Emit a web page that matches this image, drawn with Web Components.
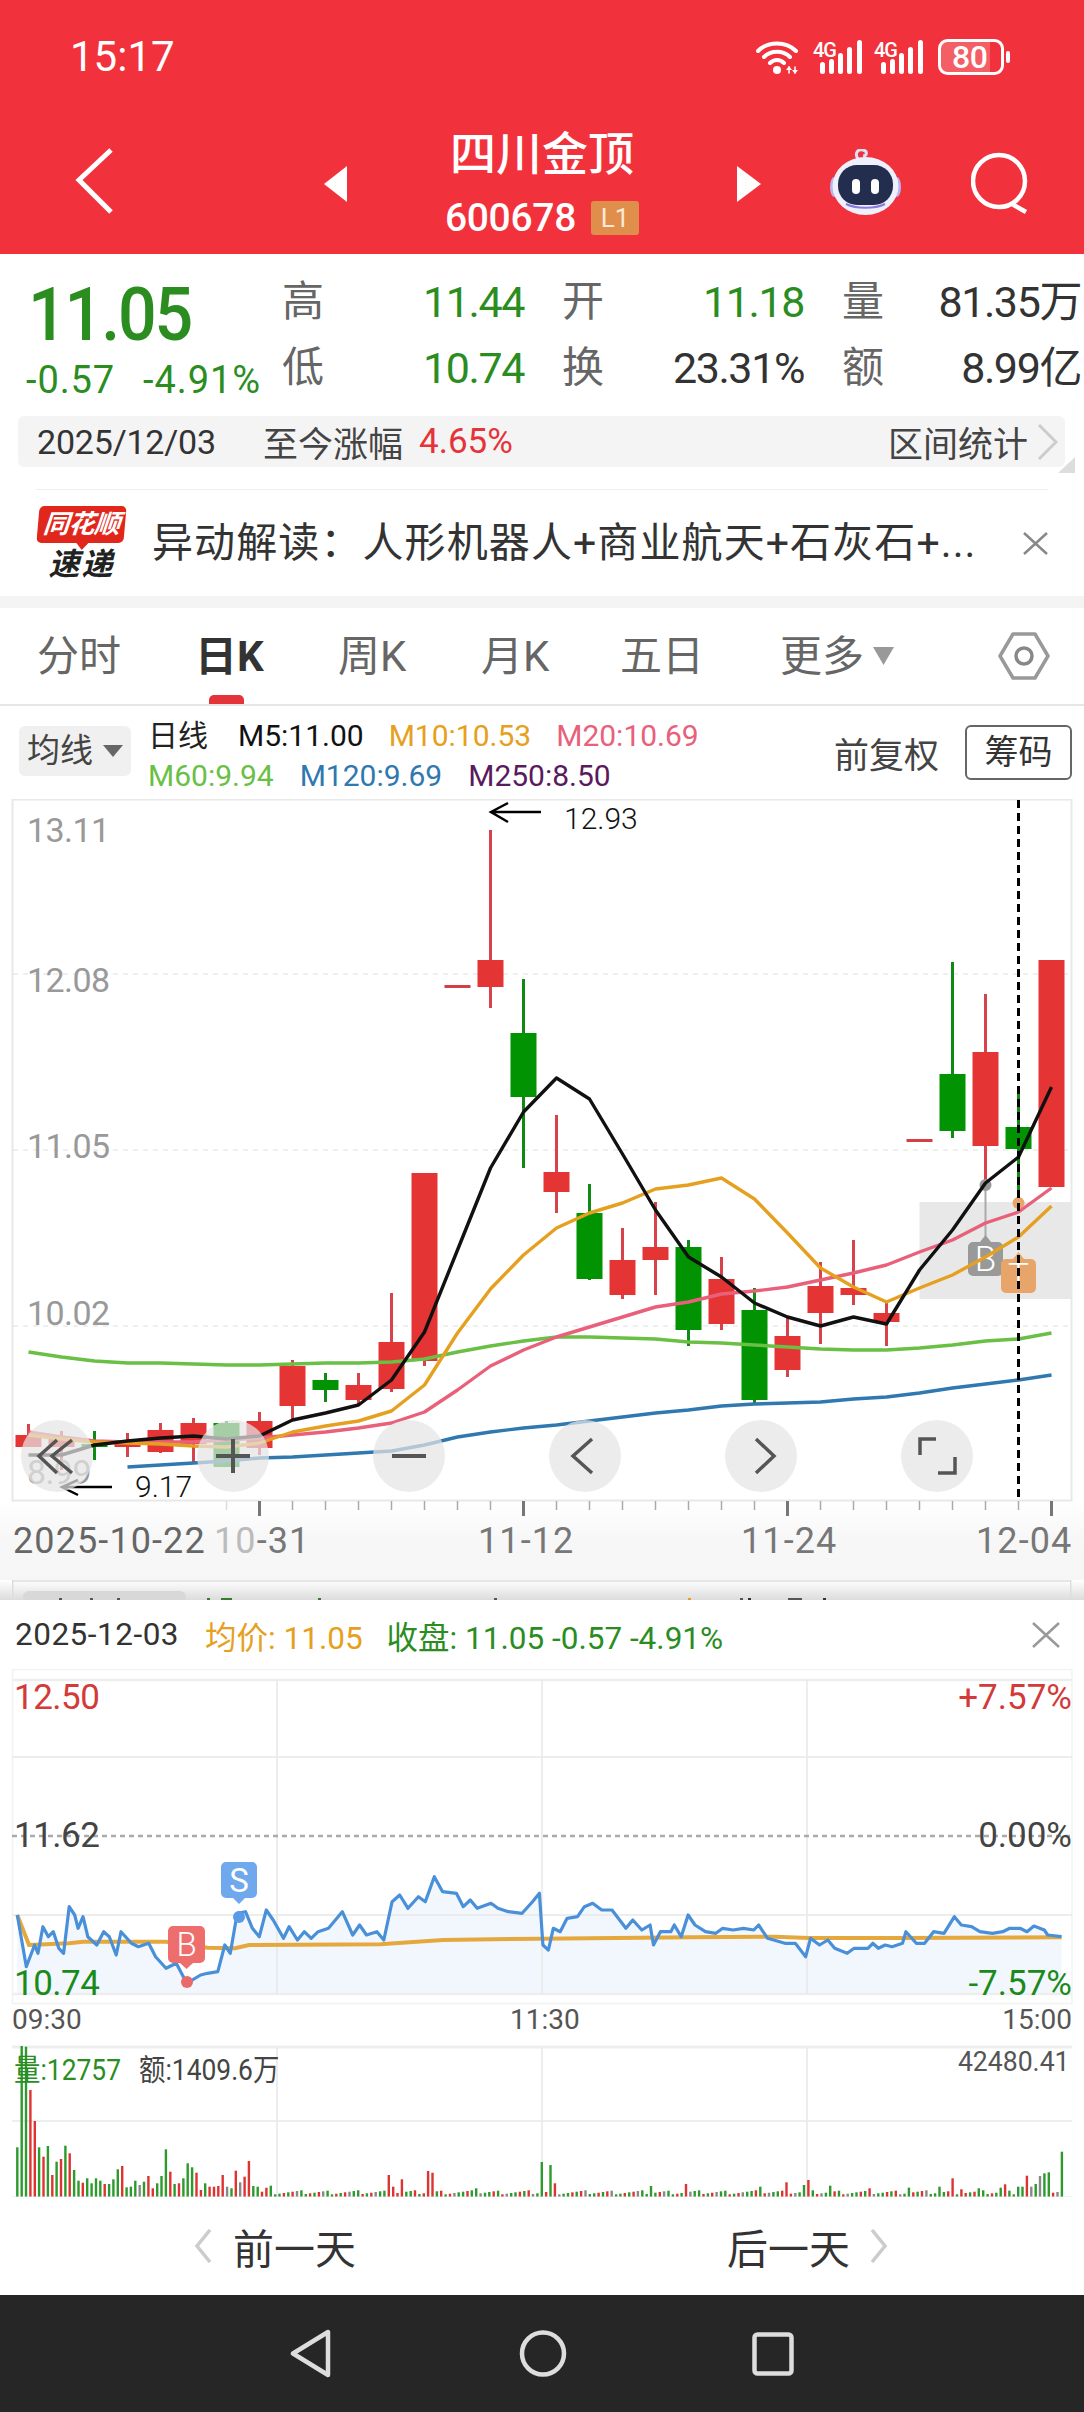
<!DOCTYPE html>
<html>
<head>
<meta charset="utf-8">
<style>
  html,body{margin:0;background:#fff}
  body{width:1084px;height:2412px;overflow:hidden;font-family:Roboto,"Noto Sans CJK SC",sans-serif}
</style>
</head>
<body>
<status-bar></status-bar>
<stock-header></stock-header>
<quote-panel></quote-panel>
<news-strip></news-strip>
<period-tabs></period-tabs>
<ma-legend></ma-legend>
<kline-chart>
  <round-btn><svg width="72" height="72" viewBox="0 0 72 72" fill="none" stroke="#555" stroke-width="3.5"><path d="M36 20 18 36 36 53M51 20 31 36 51 53"/></svg></round-btn>
  <round-btn><svg width="72" height="72" viewBox="0 0 72 72" fill="none" stroke="#555" stroke-width="4"><path d="M36 19V53M19 36H53"/></svg></round-btn>
  <round-btn><svg width="72" height="72" viewBox="0 0 72 72" fill="none" stroke="#555" stroke-width="4"><path d="M19 36H53"/></svg></round-btn>
  <round-btn><svg width="72" height="72" viewBox="0 0 72 72" fill="none" stroke="#555" stroke-width="3.5"><path d="M43 19 24 36 43 53"/></svg></round-btn>
  <round-btn><svg width="72" height="72" viewBox="0 0 72 72" fill="none" stroke="#555" stroke-width="3.5"><path d="M31 19 49 36 31 53"/></svg></round-btn>
  <round-btn><svg width="72" height="72" viewBox="0 0 72 72" fill="none" stroke="#555" stroke-width="3.5"><path d="M19 35V19H35M37 53H54V37"/></svg></round-btn>
</kline-chart>
<day-sheet></day-sheet>
<day-nav></day-nav>
<nav-bar></nav-bar>

<script>
const FONT = 'Roboto,"Noto Sans CJK SC",sans-serif';

class StatusBar extends HTMLElement {
  constructor() {
    super();
    this.attachShadow({ mode: "open" });
    const signal = `
      <i>4G</i>
      <svg width="51" height="36" viewBox="0 0 51 36">
        <g fill="#fff">
          <rect x="7" y="23" width="5" height="12" rx="2.5"/>
          <rect x="16" y="20" width="5" height="15" rx="2.5"/>
          <rect x="25" y="14" width="5" height="21" rx="2.5"/>
          <rect x="34" y="8" width="5" height="27" rx="2.5"/>
          <rect x="44" y="1" width="5" height="34" rx="2.5"/>
        </g>
      </svg>`;
    this.shadowRoot.innerHTML = `
      <style>
        :host{display:flex;align-items:center;justify-content:space-between;height:114px;background:#f1323c;color:#fff;padding:0 74px 0 70px;box-sizing:border-box;font-family:${FONT}}
        .time{font-size:42px;line-height:50px}
        .icons{display:flex;align-items:center}
        .sig{margin-left:11px;display:flex;position:relative}
        .sig i{position:absolute;left:0;top:1px;font-style:normal;font-size:20px;line-height:20px;font-weight:500;letter-spacing:-1px}
        .bat{margin-left:13px;position:relative;width:72px;height:36px}
        .bat span{position:absolute;left:14px;top:0;width:34px;text-align:center;font-size:32px;line-height:36px;font-weight:500;letter-spacing:-.5px}
      </style>
      <div class="time">15:17</div>
      <div class="icons">
        <svg width="46" height="36" viewBox="0 0 46 36" fill="none" stroke="#fff" stroke-width="4" stroke-linecap="round">
          <path d="M2 12C12 2 30 2 40 12M8 18C15 11 27 11 34 18M14 24C18 20 24 20 28 24"/>
          <circle cx="21" cy="31" r="4" fill="#fff" stroke="none"/>
          <path d="M33 28v6M39 28v6" stroke-width="1.5"/>
          <path d="M33 27l-3 4h6zM39 35l-3-4h6z" fill="#fff" stroke="none"/>
        </svg>
        <span class="sig">${signal}</span>
        <span class="sig" style="margin-left:10px">${signal}</span>
        <span class="bat">
          <svg width="72" height="36" viewBox="0 0 72 36" fill="none">
            <path d="M8 2H52V34H8A6 6 0 0 1 2 28V8A6 6 0 0 1 8 2Z" fill="#fff" fill-opacity=".22"/>
            <rect x="1.5" y="1.5" width="63" height="33" rx="8" stroke="#fff" stroke-width="3"/>
            <rect x="68" y="12" width="4" height="12" rx="2" fill="#fff"/>
          </svg>
          <span>80</span>
        </span>
      </div>`;
  }
}

class StockHeader extends HTMLElement {
  constructor() {
    super();
    this.attachShadow({ mode: "open" });
    this.shadowRoot.innerHTML = `
      <style>
        :host{display:flex;align-items:center;height:140px;background:#f1323c;color:#fff;padding-left:75px;box-sizing:border-box;font-family:${FONT}}
        .mid{width:390px;text-align:center;align-self:flex-start}
        .title{font-size:46px;font-weight:500;line-height:46px;margin-top:17px}
        .sub{display:flex;align-items:center;justify-content:center;margin-top:24px;height:34px}
        .code{font-size:39px;font-weight:500;letter-spacing:-.3px;line-height:34px}
        .badge{margin-left:15px;width:48px;height:34px;border-radius:3px;background:#e08e4c;color:#ffe9d4;font-size:26px;line-height:34px}
        svg{display:block;flex:none}
      </style>
      <svg style="margin-top:-7px" width="40" height="68" viewBox="0 0 40 68" fill="none" stroke="#fff" stroke-width="5"><path d="M36 3 4 33 36 65"/></svg>
      <svg style="margin-left:209px;margin-top:-1px" width="23" height="36" viewBox="0 0 23 36"><path d="M23 0V36L0 18Z" fill="#fff"/></svg>
      <div class="mid">
        <div class="title">四川金顶</div>
        <div class="sub"><span class="code">600678</span><span class="badge">L1</span></div>
      </div>
      <svg style="margin-top:-1px" width="24" height="36" viewBox="0 0 24 36"><path d="M0 0V36L24 18Z" fill="#fff"/></svg>
      <svg style="margin-left:69px;margin-top:-4px" width="71" height="66" viewBox="0 0 71 66">
        <path d="M28 10C24 4 28 0 33 1C38 2 37 7 33 7" fill="none" stroke="#dfe0f6" stroke-width="3"/>
        <ellipse cx="4" cy="38" rx="4" ry="10" fill="#b9b4ee"/>
        <ellipse cx="67" cy="38" rx="4" ry="10" fill="#b9b4ee"/>
        <ellipse cx="35.5" cy="37" rx="33" ry="29" fill="#eef0fc"/>
        <rect x="8" y="16" width="55" height="40" rx="19" fill="#232d4e"/>
        <rect x="22" y="30" width="8" height="15" rx="4" fill="#fff"/>
        <rect x="41" y="30" width="8" height="15" rx="4" fill="#fff"/>
        <path d="M16 55C26 60 45 60 55 55" fill="none" stroke="#8a7ae0" stroke-width="2"/>
      </svg>
      <svg style="margin-left:70px;margin-top:-2px" width="60" height="62" viewBox="0 0 60 62" fill="none" stroke="#fff" stroke-width="4.5"><circle cx="28" cy="29" r="26"/><path d="M41 52 55 60"/></svg>`;
  }
}

class QuotePanel extends HTMLElement {
  constructor() {
    super();
    this.attachShadow({ mode: "open" });
    this.shadowRoot.innerHTML = `
      <style>
        :host{display:block;height:236px;padding-top:15px;box-sizing:border-box;background:#fff;font-family:${FONT}}
        .top{display:flex;height:132px}
        .left{width:282px;padding-left:31px;box-sizing:border-box;color:#2b8d1f;flex:none}
        .price{font-size:74px;font-weight:500;line-height:92px;letter-spacing:-2.3px;white-space:nowrap;transform:scaleX(.92);transform-origin:left center;margin-left:-3px}
        .chg{font-size:38px;line-height:38px;margin-left:-5px;white-space:nowrap;letter-spacing:.9px}
        .chg span+span{margin-left:28px}
        .grid{display:grid;grid-template-columns:42px 200px 80px 200px 80px 197px;grid-auto-rows:66px;align-items:center}
        .l{font-size:42px;color:#666;justify-self:end;line-height:66px;width:42px}
        .v{font-size:43px;text-align:right;letter-spacing:-1.4px;line-height:66px;white-space:nowrap;color:#333}
        .g{color:#2b8d1f}
        .bar{position:relative;display:flex;align-items:center;margin:15px 0 0 18px;width:1047px;height:51px;background:#f4f4f4;border-radius:6px;padding-left:19px;box-sizing:border-box;font-size:35px;color:#444;white-space:nowrap}
        .d{width:229px;flex:none;color:#333;font-size:34px;letter-spacing:-.2px}
        .up{color:#e5333a;margin-left:16px}
        .r{margin-left:auto}
        .bar svg{margin:0 7px 0 9px;flex:none}
        .bar .tri{position:absolute;left:1040px;top:41px;margin:0}
        .rule{margin:22px 36px 0;height:2px;background:#eee}
      </style>
      <div class="top">
        <div class="left">
          <div class="price">11.05</div>
          <div class="chg"><span>-0.57</span><span>-4.91%</span></div>
        </div>
        <div class="grid">
          <span class="l">高</span><span class="v g">11.44</span>
          <span class="l">开</span><span class="v g">11.18</span>
          <span class="l">量</span><span class="v">81.35万</span>
          <span class="l">低</span><span class="v g">10.74</span>
          <span class="l">换</span><span class="v">23.31%</span>
          <span class="l">额</span><span class="v">8.99亿</span>
        </div>
      </div>
      <div class="bar">
        <span class="d">2025/12/03</span><span style="margin-left:-3px">至今涨幅</span><span class="up">4.65%</span>
        <span class="r">区间统计</span>
        <svg width="21" height="36" viewBox="0 0 21 36" fill="none" stroke="#ccc" stroke-width="3"><path d="M2 1 19 18 2 35"/></svg>
        <svg class="tri" width="17" height="16" viewBox="0 0 17 16"><path d="M17 0V16H0Z" fill="#ddd"/></svg>
      </div>
      <div class="rule"></div>`;
  }
}

class NewsStrip extends HTMLElement {
  constructor() {
    super();
    this.attachShadow({ mode: "open" });
    this.shadowRoot.innerHTML = `
      <style>
        :host{display:flex;align-items:center;height:118px;padding:0 36px 0 38px;box-sizing:border-box;border-bottom:12px solid #f4f4f4;background:#fff;font-family:${FONT}}
        .logo{width:87px;flex:none;text-align:center}
        .tag{position:relative;height:37px;background:#e1261c;border-radius:5px;transform:skewX(-5deg);color:#fff;font-size:26px;font-weight:700;font-style:italic;line-height:37px;white-space:nowrap;letter-spacing:-.5px}
        .tag:after{content:"";position:absolute;left:40px;top:37px;border:6px solid transparent;border-top:7px solid #e1261c;border-bottom:0}
        .sd{font-size:31px;font-weight:700;font-style:italic;line-height:32px;margin-top:6px;color:#222;letter-spacing:2px}
        .txt{margin-left:27px;font-size:41px;line-height:50px;color:#333;white-space:nowrap;letter-spacing:1.1px}
        svg{margin-left:auto;flex:none}
      </style>
      <div class="logo"><div class="tag">同花顺</div><div class="sd">速递</div></div>
      <div class="txt">异动解读：人形机器人+商业航天+石灰石+...</div>
      <svg width="25" height="23" viewBox="0 0 25 23" fill="none" stroke="#888" stroke-width="2.5"><path d="M1 1 24 22M24 1 1 22"/></svg>`;
  }
}

class PeriodTabs extends HTMLElement {
  constructor() {
    super();
    this.attachShadow({ mode: "open" });
    this.shadowRoot.innerHTML = `
      <style>
        :host{display:flex;align-items:center;height:98px;box-sizing:border-box;border-bottom:2px solid #e6e6e6;background:#fff;color:#666;font-size:42px;font-family:${FONT};position:relative;white-space:nowrap}
        span{display:block;position:absolute;top:1px;line-height:96px}
        .on{color:#333;font-weight:700}
        .on:after{content:"";position:absolute;left:14px;width:35px;top:86px;height:9px;border-radius:5px 5px 0 0;background:#e5333a}
        svg{position:absolute}
      </style>
      <span style="left:37px">分时</span>
      <span class="on" style="left:195px">日K</span>
      <span style="left:338px">周K</span>
      <span style="left:481px">月K</span>
      <span style="left:620px">五日</span>
      <span style="left:780px">更多</span>
      <svg style="left:873px;top:39px" width="21" height="18" viewBox="0 0 21 18"><path d="M0 0H21L10.5 18Z" fill="#999"/></svg>
      <svg style="left:998px;top:23px" width="52" height="50" viewBox="0 0 52 50" fill="none" stroke="#999" stroke-width="3.5" stroke-linejoin="round"><path d="M15 3H37L50 25 37 47H15L2 25Z"/><circle cx="26" cy="25" r="8" stroke="#888"/></svg>`;
  }
}

class MaLegend extends HTMLElement {
  constructor() {
    super();
    this.attachShadow({ mode: "open" });
    this.shadowRoot.innerHTML = `
      <style>
        :host{display:flex;align-items:center;height:93px;padding:0 12px 0 19px;box-sizing:border-box;background:#fff;font-family:${FONT};font-size:30px;white-space:nowrap}
        .sel{display:flex;align-items:center;width:112px;height:50px;background:#f0f0f0;border-radius:6px;padding-left:8px;box-sizing:border-box;font-size:33px;line-height:46px;color:#444;flex:none;margin-top:-3px}
        .sel svg{margin-left:10px}
        .lines{margin-left:17px;align-self:flex-start;margin-top:10px}
        .row{display:flex;height:40px;line-height:40px;letter-spacing:0}
        .btn{margin-left:26px;width:107px;height:55px;border:2px solid #666;border-radius:6px;box-sizing:border-box;text-align:center;font-size:34px;line-height:50px;color:#333;flex:none}
        .fq{margin-left:auto;font-size:35px;color:#444}
      </style>
      <div class="sel">均线<svg width="20" height="12" viewBox="0 0 20 12"><path d="M0 0H20L10 12Z" fill="#666"/></svg></div>
      <div class="lines">
        <div class="row"><span style="color:#222;margin-right:30px">日线</span><span style="color:#111;margin-right:25px">M5:11.00</span><span style="color:#e6a020;margin-right:25px">M10:10.53</span><span style="color:#e9607a">M20:10.69</span></div>
        <div class="row"><span style="color:#6abf45;margin-right:26px">M60:9.94</span><span style="color:#2f78b0;margin-right:26px">M120:9.69</span><span style="color:#5a1a5e">M250:8.50</span></div>
      </div>
      <span class="fq">前复权</span>
      <span class="btn">筹码</span>`;
  }
}

class RoundBtn extends HTMLElement {
  constructor() {
    super();
    this.attachShadow({ mode: "open" });
    this.shadowRoot.innerHTML = `
      <style>:host{display:block;width:72px;height:72px;border-radius:50%;background:rgba(228,228,228,.72);flex:none}
      ::slotted(svg){display:block}</style><slot></slot>`;
  }
}

class KlineChart extends HTMLElement {
  constructor() {
    super();
    this.attachShadow({ mode: "open" });
    const X = i => 28.5 + 33 * i;
    const R = "#e53434", G = "#019301";
    // i, wick top, wick bottom, body top, body bottom, colour
    const candles = [
      [0,1424,1447,1435,1447,R],[1,1431,1470,1438,1447,R],[2,1431,1460,1444,1447,G],[3,1433,1457,1444,1447,R],
      [4,1423,1453,1430,1452,R],[5,1418,1462,1423,1444,R],[6,1421,1467,1423,1467,G],[7,1412,1455,1421,1448,R],
      [8,1360,1420,1366,1406,R],[9,1373,1402,1380,1390,G],[10,1373,1405,1385,1400,R],[11,1293,1392,1342,1389,R],
      [12,1173,1366,1173,1361,R],[13,985,988,985,988,"#d43f45"],[14,830,1008,960,987,R],[15,979,1168,1033,1097,G],
      [16,1115,1213,1172,1192,R],[17,1184,1280,1213,1279,G],[18,1228,1299,1260,1295,R],[19,1202,1295,1247,1260,R],
      [20,1240,1346,1247,1330,G],[21,1257,1330,1279,1324,R],[22,1288,1403,1310,1400,G],[23,1317,1377,1336,1370,R],
      [24,1262,1344,1286,1313,R],[25,1240,1305,1288,1295,R],[26,1302,1346,1313,1322,R],[27,1139,1142,1139,1142,"#d43f45"],
      [28,962,1138,1074,1131,G],[29,994,1183,1052,1146,R],[30,1090,1200,1127,1149,G],[31,960,1187,960,1187,R]
    ];
    const wickCol = c => c === G ? "#0f8a15" : "#d8424a";
    const bars = candles.map(([i, wt, wb, bt, bb, c]) =>
      `<rect x="${X(i) - 1.5}" y="${wt}" width="3" height="${wb - wt}" fill="${wickCol(c)}"/>` +
      `<rect x="${X(i) - 13}" y="${bt}" width="26" height="${bb - bt}" fill="${c}"/>`).join("");
    const line = (ys, col, w, from = 0) =>
      `<polyline fill="none" stroke="${col}" stroke-width="${w}" stroke-linejoin="round" points="${ys.map((y, k) => X(k + from) + "," + y).join(" ")}"/>`;
    const m5 = [1455,1455,1445,1441,1438,1436,1439,1436,1420,1413,1405,1380,1332,1250,1168,1112,1078,1099,1154,1210,1257,1277,1303,1317,1326,1317,1324,1270,1230,1183,1157,1087];
    const m10 = [1435,1439,1442,1443,1444,1446,1447,1443,1432,1426,1421,1411,1385,1333,1289,1255,1228,1213,1203,1189,1185,1178,1199,1233,1268,1287,1302,1288,1275,1257,1237,1206];
    const m20 = [1432,1437,1441,1442,1442,1442,1440,1438,1435,1432,1428,1423,1412,1390,1366,1350,1337,1327,1317,1307,1302,1294,1291,1287,1280,1273,1265,1252,1240,1223,1212,1188];
    const m60 = [1352,1357,1361,1363,1363,1364,1365,1365,1364,1363,1363,1362,1359,1352,1346,1341,1337,1337,1338,1339,1342,1343,1345,1347,1349,1350,1350,1348,1345,1341,1339,1333];
    const m120 = [1467,1465,1463,1461,1458,1457,1455,1453,1451,1445,1437,1432,1428,1425,1421,1417,1413,1410,1406,1404,1403,1402,1399,1397,1393,1388,1384,1380,1375];
    let ticks = "";
    for (let i = 6; i < 32; i++) {
      const major = (i - 7) % 8 === 0;
      ticks += `<rect x="${X(i) - (major ? 1.5 : .75)}" y="1501" width="${major ? 3 : 1.5}" height="${major ? 15 : 9}" fill="${major ? "#777" : "#aaa"}" ${i === 6 ? 'opacity=".4"' : ""}/>`;
    }
    const peeks = [[59,3],[90,3],[117,3],[207,3],[221,11],[318,3],[494,3],[688,3],[740,3],[748,3],[788,14],[823,3]]
      .map(([x, w], k) => `<rect x="${x}" y="1598" width="${w}" height="2" fill="${k === 9 || k === 11 ? "#333" : k === 7 ? "#e6a020" : k > 2 && k < 6 ? "#3a7a30" : "#555"}"/>`).join("");
    const price = (t, y) => `<span class="p" style="left:27px;top:${y - 799}px">${t}</span>`;
    const axis = (t, x, extra = "") => `<span class="a" style="left:${x}px;${extra}">${t}</span>`;
    this.shadowRoot.innerHTML = `
      <style>
        :host{display:block;position:relative;width:1084px;height:801px;background:#fff;overflow:hidden;font-family:${FONT}}
        svg.c{display:block}
        span{position:absolute;white-space:nowrap}
        .p{font-size:34px;line-height:34px;color:#999;letter-spacing:-.6px;transform:translateY(-50%)}
        .a{top:${1541 - 799}px;font-size:36px;line-height:36px;color:#777;letter-spacing:1.1px;transform:translateY(-50%)}
        .a b{font-weight:400;color:#bbb}
        .n{font-size:30px;line-height:30px;color:#111;font-weight:300;transform:translateY(-50%)}
        .btns{position:absolute;left:21px;top:${1420 - 799}px;display:flex;gap:104px}
      </style>
      <svg class="c" width="1084" height="801" viewBox="0 799 1084 801">
        <defs>
          <linearGradient id="ax" x1="0" y1="0" x2="0" y2="1"><stop offset="0" stop-color="#fff"/><stop offset=".5" stop-color="#f7f7f7"/><stop offset="1" stop-color="#f6f6f6"/></linearGradient>
          <linearGradient id="sh" x1="0" y1="0" x2="0" y2="1"><stop offset="0" stop-color="#fff"/><stop offset="1" stop-color="#dcdcdc"/></linearGradient>
        </defs>
        <rect x="0" y="1500" width="1084" height="80" fill="url(#ax)"/>
        <rect x="0" y="1580" width="1084" height="20" fill="url(#sh)"/>
        <rect x="12" y="1580" width="1059" height="2" fill="#e6e6e6"/>
        <rect x="12" y="1580" width="1.5" height="20" fill="#ddd"/><rect x="1070" y="1580" width="1.5" height="20" fill="#ddd"/>
        <rect x="23" y="1591" width="163" height="12" rx="6" fill="#d8d8d8"/>
        ${peeks}
        <rect x="919.5" y="1202" width="151.5" height="97" fill="#e8e8e8"/>
        <rect x="12.5" y="799.5" width="1059" height="701" fill="none" stroke="#e8e8e8" stroke-width="2"/>
        <g stroke="#e0e0e0" stroke-width="1.2" stroke-dasharray="5 5"><path d="M13 974H1070M13 1150H1070M13 1326H1070"/></g>
        ${ticks}
        ${bars}
        <path d="M985.5 1183V1236" stroke="#aaa" stroke-width="2"/>
        <circle cx="985.5" cy="1185" r="6" fill="#999"/>
        <circle cx="1018.5" cy="1203" r="6" fill="#e8a56a"/>
        <path d="M968 1247a5 5 0 0 1 5-5h7l5.500-7 5.500 7h7a5 5 0 0 1 5 5v24a5 5 0 0 1-5 5h-25a5 5 0 0 1-5-5Z" fill="#999"/>
        <text x="985.500" y="1271" text-anchor="middle" font-family="Roboto" font-weight="300" font-size="35" fill="#fff">B</text>
        <path d="M1001 1264a5 5 0 0 1 5-5h7l5.500-7 5.500 7h7a5 5 0 0 1 5 5v24a5 5 0 0 1-5 5h-25a5 5 0 0 1-5-5Z" fill="#e8a56a"/>
        <text x="1018.500" y="1288" text-anchor="middle" font-family="Roboto" font-weight="300" font-size="35" fill="#fff">T</text>
        ${line(m120, "#2f78b0", 3.4, 3)}
        ${line(m60, "#6abf45", 3.4)}
        ${line(m20, "#e9607a", 3.4)}
        ${line(m10, "#e6a020", 3.4)}
        ${line(m5, "#111", 3.4)}
        <path d="M1018.500 800V1501" stroke="#000" stroke-width="3" stroke-dasharray="8 5"/>
        <g fill="none" stroke="#000" stroke-width="2.500"><path d="M541 812H491M508 803 491 812 508 822"/><path d="M112 1487H63M78 1480 62 1487 78 1495"/></g>
      </svg>
      ${price("13.11", 830)}${price("12.08", 980)}${price("11.05", 1146)}${price("10.02", 1313)}${price("8.99", 1472)}
      <span class="n" style="left:564px;top:${819 - 799}px">12.93</span>
      <span class="n" style="left:135px;top:${1487 - 799}px">9.17</span>
      ${axis("2025-10-22", 13, "color:#666")}${axis("<b>10</b>-31", 214)}${axis("11-12", 478)}${axis("11-24", 741)}${axis("12-04", 976)}
      <div class="btns"><slot></slot></div>`;
  }
}

class DaySheet extends HTMLElement {
  constructor() {
    super();
    this.attachShadow({ mode: "open" });
    const PX = x => (x / 1.446).toFixed(1), PY = y => (y / 3 + 1600).toFixed(1);
    const blue = [25,945,38,1100,50,1035,55,1060,62,980,70,1010,77,995,85,1045,92,1060,100,920,108,945,113,985,120,950,127,1010,140,1035,150,995,158,1010,168,1065,175,995,190,1030,200,1040,215,1030,225,1070,240,1105,255,1090,270,1150,290,1125,300,1120,315,1115,325,1035,333,1060,343,940,355,935,365,985,375,1010,385,930,395,960,410,1015,418,980,430,1020,440,995,450,1015,460,995,475,985,495,935,510,1005,520,975,530,1005,545,995,555,1020,567,905,578,885,590,925,605,890,615,905,628,830,640,875,660,880,670,920,680,900,690,925,710,910,720,925,735,935,755,940,770,905,780,880,785,1035,793,1050,800,985,810,995,820,955,835,950,845,920,857,910,870,930,885,930,905,985,915,960,928,990,940,975,945,1035,955,995,970,995,975,975,985,1010,995,945,1005,975,1020,995,1035,1000,1045,985,1060,990,1075,985,1090,990,1097,975,1110,1015,1135,1030,1150,1030,1165,1070,1172,1015,1185,1035,1197,1020,1207,1045,1225,1060,1235,1045,1255,1045,1262,1030,1270,1045,1280,1035,1290,1040,1305,1030,1310,995,1325,1030,1337,1030,1350,995,1365,1000,1380,950,1390,975,1405,980,1417,995,1435,1000,1450,995,1460,985,1475,985,1485,995,1495,978,1510,990,1515,1005,1535,1010];
    const orange = [25,945,42,1035,100,1030,120,1025,240,1025,300,1043,340,1045,360,1035,550,1033,640,1020,780,1016,1000,1012,1120,1010,1170,1014,1300,1014,1535,1012];
    const pts = a => { let s = ""; for (let i = 0; i < a.length; i += 2) s += PX(a[i]) + "," + PY(a[i + 1]) + " "; return s; };
    const area = pts(blue) + PX(1535) + "," + PY(1182) + " " + PX(25) + "," + PY(1182);

    // volume: tops read from the reference, the quiet part of the day is filled in
    const g = "#2d9a2d", r = "#dd3333", k = "#888";
    const head = [[412,g],[108,g],[110,g],[240,r],[333,r],[412,g],[440,r],[408,g],[495,r],[455,g],[447,r],[407,g],[430,r],[480,g],[512,g],[518,r],[505,g],[520,g],[505,g],[512,g],[522,r],[522,g],[508,g],[478,g],[468,r],[532,g],[530,g],[512,g],[525,k],[515,g],[498,r],[535,r],[520,g],[498,g],[418,g],[485,r],[522,g],[520,r],[505,g],[460,g],[472,g],[488,r],[540,r],[520,g],[530,r],[530,r],[528,r],[495,r],[530,k],[535,g],[482,r],[517,k],[500,r],[453,r],[528,g],[530,g],[545,r],[533,r],[527,g]];
    const peaks = {565:[495,r],571:[530,r],578:[508,r],584:[510,g],622:[483,r],628:[488,r],686:[535,g],786:[456,g],793:[465,g],800:[520,r],944:[528,g],995:[522,r],1100:[530,g],1140:[517,r],1165:[525,g],1172:[510,r],1203:[527,g],1260:[535,r],1317:[533,g],1361:[530,g],1380:[505,r],1392:[538,r],1417:[535,g],1448:[533,g],1455:[523,r],1473:[530,g],1480:[530,g],1487:[497,r],1493:[530,k],1499:[522,g],1505:[498,k],1512:[490,g],1518:[487,g],1538:[425,g]};
    const peakKeys = Object.keys(peaks).map(v => Math.round((v - 25) / 6.32));
    const peakVals = Object.values(peaks);
    let vols = "";
    for (let i = 0; i < 240; i++) {
      let top, col;
      const at = peakKeys.indexOf(i);
      if (i < head.length) [top, col] = head[i];
      else if (at >= 0) [top, col] = peakVals[at];
      else { top = 541 + (i * 37 % 13); col = [g, r, g, r, k, g][i * 7 % 6]; }
      const x = (25 + 6.32 * i) / 1.446;
      const y = top / 3 + 2010;
      vols += `<rect x="${(x - 1.2).toFixed(1)}" y="${y.toFixed(1)}" width="2.4" height="${(2197 - y).toFixed(1)}" fill="${col}"/>`;
    }
    const lab = (t, css) => `<span style="${css}">${t}</span>`;
    const Y = v => v - 1669;
    this.shadowRoot.innerHTML = `
      <style>
        :host{display:block;position:relative;background:#fff;font-family:${FONT};overflow:hidden}
        .h{display:flex;align-items:center;height:69px;padding:0 24px 0 15px;box-sizing:border-box;font-size:31.5px;white-space:nowrap}
        .h b{font-weight:400}
        .cv{position:relative;width:1084px;height:528px}
        svg.c{display:block}
        .cv span{position:absolute;white-space:nowrap;transform:translateY(-50%);line-height:1}
        .cv span.nr{transform:translateY(-50%) scaleX(.88);transform-origin:left center}
        .cv span.nl{transform:translateY(-50%) scaleX(.95);transform-origin:right center}
      </style>
      <div class="h">
        <b style="color:#333;letter-spacing:.5px">2025-12-03</b>
        <b style="color:#e6a020;margin-left:26px">均价: 11.05</b>
        <b style="color:#2b8d1f;margin-left:24px">收盘: 11.05 -0.57 -4.91%</b>
        <svg style="margin-left:auto" width="28" height="26" viewBox="0 0 28 26" fill="none" stroke="#999" stroke-width="2.500"><path d="M1 1 27 25M27 1 1 25"/></svg>
      </div>
      <div class="cv">
        <svg class="c" width="1084" height="528" viewBox="0 1669 1084 528">
          <polygon points="${area}" fill="#f2f7fd"/>
          <rect x="12.500" y="1669.500" width="1059.500" height="334" fill="none" stroke="#f2f2f2" stroke-width="1.500"/>
          <path d="M12 1680H1072M12 1994H1072" stroke="#eee" stroke-width="2.500"/>
          <path d="M12 1757H1072M12 1915H1072M277 1679V1994M542 1679V1994M807 1679V1994M277 2046V2197M542 2046V2197M807 2046V2197" stroke="#e8e8e8" stroke-width="1.500"/>
          <path d="M12 1836H1072" stroke="#aaa" stroke-width="2.500" stroke-dasharray="5 4"/>
          <polyline points="${pts(orange)}" fill="none" stroke="#e5a83c" stroke-width="4"/>
          <polyline points="${pts(blue)}" fill="none" stroke="#4a90d9" stroke-width="3.200" stroke-linejoin="round"/>
          <circle cx="187" cy="1982" r="6" fill="#e86a6a"/>
          <circle cx="239" cy="1917" r="6" fill="#5a9ae6"/>
          <path d="M168 1931a5 5 0 0 1 5-5h27a5 5 0 0 1 5 5v27a5 5 0 0 1-5 5h-7l-6.500 6-6.500-6h-7a5 5 0 0 1-5-5Z" fill="#ee6e6e"/>
          <text x="186.500" y="1956" text-anchor="middle" font-family="Roboto" font-size="33" font-weight="300" fill="#fff">B</text>
          <path d="M221 1867a5 5 0 0 1 5-5h26a5 5 0 0 1 5 5v26a5 5 0 0 1-5 5h-7l-6 6-6-6h-7a5 5 0 0 1-5-5Z" fill="#6fa8ec"/>
          <text x="239" y="1892" text-anchor="middle" font-family="Roboto" font-size="33" fill="#fff">S</text>
          <path d="M12 2047H1072" stroke="#eee" stroke-width="3"/>
          <path d="M12 2121H1072" stroke="#e8e8e8" stroke-width="1.500"/>
          ${vols}
          <path d="M12 2197H1072" stroke="#e5e5e5" stroke-width="1"/>
        </svg>
        ${lab("12.50", `left:14px;top:${Y(1697)}px;font-size:35px;letter-spacing:-.5px;color:#d33a3a`)}
        ${lab("+7.57%", `right:12px;top:${Y(1697)}px;font-size:35px;color:#d33a3a`)}
        ${lab("11.62", `left:14px;top:${Y(1835)}px;font-size:35px;letter-spacing:-.5px;color:#444`)}
        ${lab("0.00%", `right:12px;top:${Y(1835)}px;font-size:35px;color:#444`)}
        ${lab("10.74", `left:14px;top:${Y(1983)}px;font-size:35px;letter-spacing:-.5px;color:#1a8a1a`)}
        ${lab("-7.57%", `right:12px;top:${Y(1983)}px;font-size:35px;color:#1a8a1a`)}
        ${lab("09:30", `left:12px;top:${Y(2020)}px;font-size:28px;color:#555`)}
        ${lab("11:30", `left:510px;top:${Y(2020)}px;font-size:28px;color:#555`)}
        ${lab("15:00", `right:12px;top:${Y(2020)}px;font-size:28px;color:#555`)}
        <span class="nr" style="left:14px;top:${Y(2070)}px;font-size:30px;color:#2b8d1f">量:12757</span>
        <span class="nr" style="left:139px;top:${Y(2070)}px;font-size:30px;color:#444">额:1409.6万</span>
        <span class="nl" style="right:14px;top:${Y(2062)}px;font-size:28px;color:#555">42480.41</span>
      </div>`;
  }
}

class DayNav extends HTMLElement {
  constructor() {
    super();
    this.attachShadow({ mode: "open" });
    this.shadowRoot.innerHTML = `
      <style>
        :host{display:flex;align-items:center;height:98px;background:#fff;padding-left:194px;box-sizing:border-box;font-family:${FONT};font-size:41px;color:#333;white-space:nowrap}
        svg{flex:none}
      </style>
      <svg width="18" height="34" viewBox="0 0 18 34" fill="none" stroke="#ccc" stroke-width="3.500"><path d="M16 1 3 17 16 33"/></svg>
      <span style="margin-left:21px">前一天</span>
      <span style="margin-left:371px">后一天</span>
      <svg style="margin-left:20px" width="18" height="34" viewBox="0 0 18 34" fill="none" stroke="#ccc" stroke-width="3.500"><path d="M2 1 15 17 2 33"/></svg>`;
  }
}

class NavBar extends HTMLElement {
  constructor() {
    super();
    this.attachShadow({ mode: "open" });
    this.shadowRoot.innerHTML = `
      <style>
        :host{display:flex;align-items:center;height:117px;background:#262626;padding-left:289px;box-sizing:border-box}
        svg{flex:none}
      </style>
      <svg width="43" height="49" viewBox="0 0 43 49" fill="none" stroke="#ddd" stroke-width="4.500" stroke-linejoin="round"><path d="M39 3V46L4 24.500Z"/></svg>
      <svg style="margin-left:187px" width="48" height="49" viewBox="0 0 48 49" fill="none" stroke="#ddd" stroke-width="4.500"><circle cx="24" cy="24.500" r="21"/></svg>
      <svg style="margin-left:185px" width="42" height="44" viewBox="0 0 42 44" fill="none" stroke="#ddd" stroke-width="4.500"><rect x="2.500" y="2.500" width="37" height="39" rx="3"/></svg>`;
  }
}

customElements.define("status-bar", StatusBar);
customElements.define("stock-header", StockHeader);
customElements.define("quote-panel", QuotePanel);
customElements.define("news-strip", NewsStrip);
customElements.define("period-tabs", PeriodTabs);
customElements.define("ma-legend", MaLegend);
customElements.define("round-btn", RoundBtn);
customElements.define("kline-chart", KlineChart);
customElements.define("day-sheet", DaySheet);
customElements.define("day-nav", DayNav);
customElements.define("nav-bar", NavBar);
</script>
</body>
</html>
